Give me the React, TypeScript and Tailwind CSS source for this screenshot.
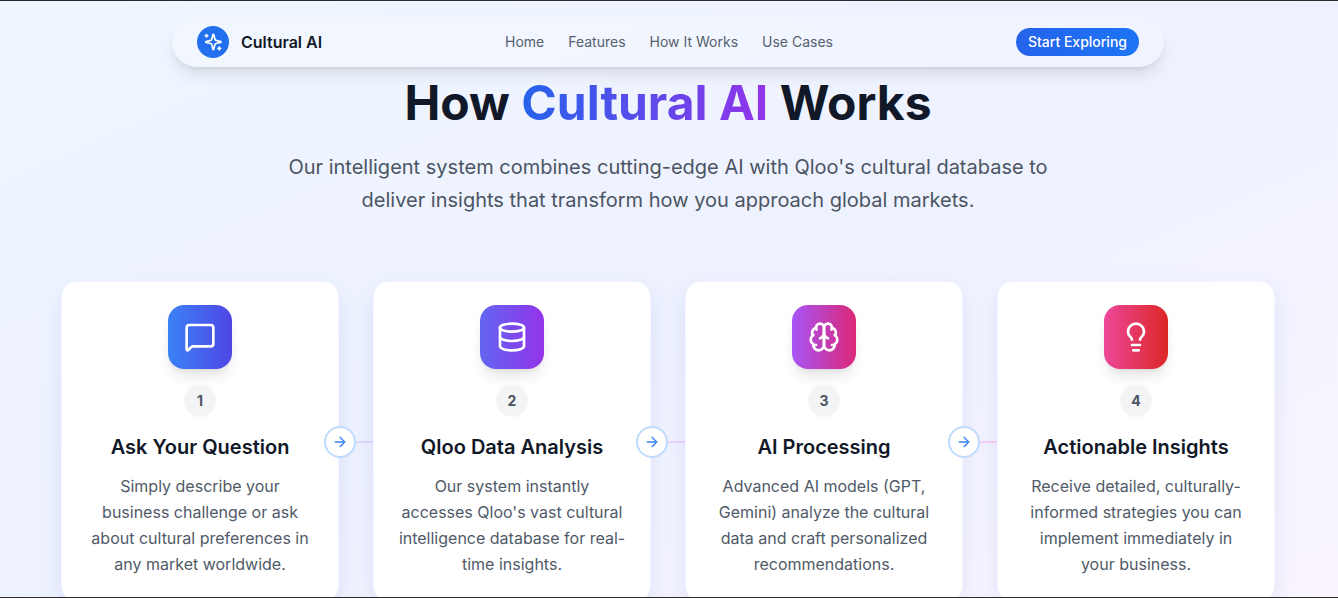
import { ArrowRight, Database, Lightbulb, MessageSquare } from "lucide-react";

const navLinks = ["Home", "Features", "How It Works", "Use Cases"];

function BrainIcon({ className }: { className?: string }) {
  return (
    <svg className={className} viewBox="0 0 24 24" fill="none" stroke="currentColor" strokeWidth="2" strokeLinecap="round" strokeLinejoin="round">
      <path d="M12 5a3 3 0 1 0-5.997.125 4 4 0 0 0-2.526 5.77 4 4 0 0 0 .556 6.588A4 4 0 1 0 12 18Z" />
      <path d="M12 5a3 3 0 1 1 5.997.125 4 4 0 0 1 2.526 5.77 4 4 0 0 1-.556 6.588A4 4 0 1 1 12 18Z" />
      <path d="M15 13a4.5 4.5 0 0 1-3-4 4.5 4.5 0 0 1-3 4" />
      <path d="M17.599 6.5a3 3 0 0 0 .399-1.375" />
      <path d="M6.003 5.125A3 3 0 0 0 6.401 6.5" />
      <path d="M3.477 10.896a4 4 0 0 1 .585-.396" />
      <path d="M19.938 10.5a4 4 0 0 1 .585.396" />
      <path d="M6 18a4 4 0 0 1-1.967-.516" />
      <path d="M19.967 17.484A4 4 0 0 1 18 18" />
    </svg>
  );
}

const steps = [
  {
    n: 1,
    title: "Ask Your Question",
    text: "Simply describe your business challenge or ask about cultural preferences in any market worldwide.",
    icon: MessageSquare,
    gradient: "bg-linear-to-r/srgb from-[#3b82f6] to-[#4f46e5]",
    line: "from-[#dbd9fd] to-[#ddd6fe]",
  },
  {
    n: 2,
    title: "Qloo Data Analysis",
    text: "Our system instantly accesses Qloo's vast cultural intelligence database for real-time insights.",
    icon: Database,
    gradient: "bg-linear-to-r/srgb from-[#6366f1] to-[#9333ea]",
    line: "from-[#e9d5ff] to-[#e9d5ff]",
  },
  {
    n: 3,
    title: "AI Processing",
    text: "Advanced AI models (GPT, Gemini) analyze the cultural data and craft personalized recommendations.",
    icon: BrainIcon,
    gradient: "bg-linear-to-r/srgb from-[#a855f7] to-[#db2777]",
    line: "from-[#f5d0fe] to-[#fbcfe8]",
  },
  {
    n: 4,
    title: "Actionable Insights",
    text: "Receive detailed, culturally-informed strategies you can implement immediately in your business.",
    icon: Lightbulb,
    gradient: "bg-linear-to-r/srgb from-[#ec4899] to-[#dc2626]",
    line: "",
  },
];

function SparkleLogo() {
  return (
    <svg width="20" height="20" viewBox="0 0 24 24" fill="none" stroke="currentColor" strokeWidth="2" strokeLinecap="round" strokeLinejoin="round">
      <path
        transform="translate(1.4 0.9) scale(0.92)"
        strokeWidth="2.2"
        d="M9.937 15.5A2 2 0 0 0 8.5 14.063l-6.135-1.582a.5.5 0 0 1 0-.962L8.5 9.936A2 2 0 0 0 9.937 8.5l1.582-6.135a.5.5 0 0 1 .963 0L14.063 8.5A2 2 0 0 0 15.5 9.937l6.135 1.581a.5.5 0 0 1 0 .964L15.5 14.063a2 2 0 0 0-1.437 1.437l-1.582 6.135a.5.5 0 0 1-.963 0z"
      />
      <path d="M4.2 3v3M2.7 4.5h3" />
      <path d="M19.6 18.2v3M18.1 19.7h3" />
    </svg>
  );
}

export default function App() {
  return (
    <div className="h-[598px] overflow-hidden border-y border-[#2b2b2b] bg-linear-to-br/srgb from-[#eff6ff] via-[#eef2ff] to-[#faf5ff] font-['Inter',sans-serif]">
      <div className="w-[1336px]">
        <nav className="mx-auto mt-4 flex h-[50px] w-[992px] items-center justify-between rounded-full bg-white/20 px-[25px] shadow-lg">
          <div className="flex w-[200px] items-center gap-3">
            <div className="flex h-8 w-8 items-center justify-center rounded-full bg-[#2270ee] text-white">
              <SparkleLogo />
            </div>
            <span className="font-semibold text-[#111827]">Cultural AI</span>
          </div>
          <div className="ml-0.5 flex items-center gap-6">
            {navLinks.map((link) => (
              <a key={link} className="text-sm text-[#566070]">
                {link}
              </a>
            ))}
          </div>
          <div className="flex w-[200px] justify-end">
            <button className="h-7 rounded-full bg-linear-to-r/srgb from-[#2563eb] to-[#1d74f5] px-3 text-sm font-medium text-white">
              Start Exploring
            </button>
          </div>
        </nav>

        <h1 className="mt-3 text-center text-5xl font-bold leading-[48px] text-[#111827]">
          How{" "}
          <span className="bg-linear-to-r/srgb from-[#2563eb] to-[#9333ea] bg-clip-text text-transparent">Cultural AI</span>{" "}
          Works
        </h1>
        <p className="mx-auto mt-6 max-w-3xl text-center text-xl leading-[33px] text-[#4b5563]">
          Our intelligent system combines cutting-edge AI with Qloo's cultural database to deliver insights that transform how you approach global markets.
        </p>

        <div className="mx-auto mt-16 grid w-[1214px] grid-cols-4 gap-[34px]">
          {steps.map((step) => {
            const Icon = step.icon;
            return (
              <div key={step.n} className="relative rounded-2xl border border-[#f3f7ff] bg-white px-6 pb-6 pt-[23px] text-center shadow-[0_10px_25px_rgba(30,64,175,0.1)]">
                <div className={`mx-auto flex h-16 w-16 items-center justify-center rounded-2xl shadow-lg ${step.gradient}`}>
                  <Icon className="h-8 w-8 text-white" />
                </div>
                <div className="mx-auto mt-4 flex h-8 w-8 items-center justify-center rounded-full bg-[#f3f4f6] text-sm font-bold text-[#4b5563]">
                  {step.n}
                </div>
                <h3 className="mt-4 text-xl font-semibold leading-7 text-[#111827]">{step.title}</h3>
                <p className="mt-3 leading-[26px] text-[#505a68]">{step.text}</p>
                {step.line && (
                  <div className="absolute left-[262px] top-[144px] flex items-center">
                    <div className="z-10 flex h-8 w-8 items-center justify-center rounded-full border-2 border-[#bfdbfe] bg-white">
                      <ArrowRight className="h-4 w-4 text-[#3b82f6]" />
                    </div>
                    <div className={`h-0.5 w-[18px] bg-linear-to-r/srgb ${step.line}`} />
                  </div>
                )}
              </div>
            );
          })}
        </div>
      </div>
    </div>
  );
}
